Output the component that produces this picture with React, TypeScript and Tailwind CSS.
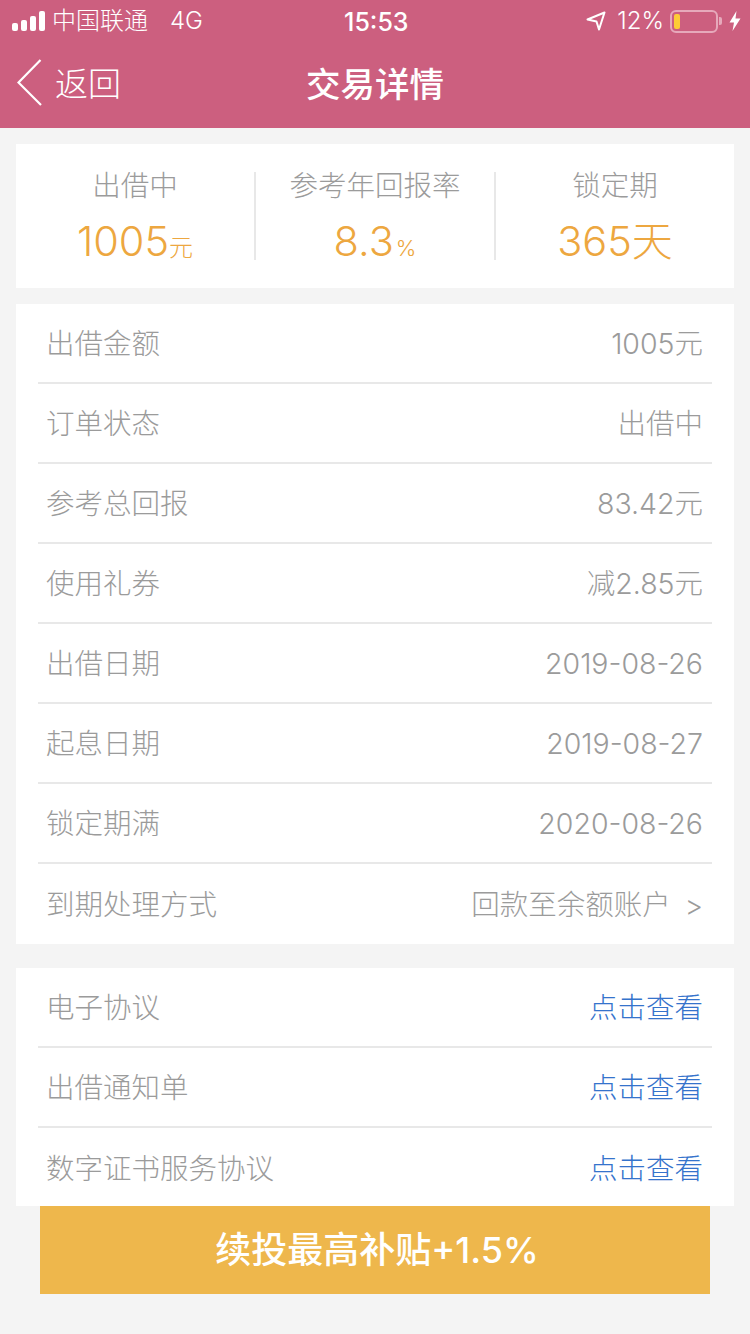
const font = "font-['Inter','Noto_Sans_CJK_SC',sans-serif]";

const details = [
  ["出借金额", "1005元"],
  ["订单状态", "出借中"],
  ["参考总回报", "83.42元"],
  ["使用礼券", "减2.85元"],
  ["出借日期", "2019-08-26"],
  ["起息日期", "2019-08-27"],
  ["锁定期满", "2020-08-26"],
];

const docs = ["电子协议", "出借通知单", "数字证书服务协议"];

function Row({ label, last, children }: { label: string; last?: boolean; children: React.ReactNode }) {
  return (
    <div className={`flex h-20 items-center justify-between pl-[8px] pr-[9px] pt-[3px] font-light text-[28.5px] text-[#9b9b9b] ${last ? "pb-0" : "border-b-2 border-[#e8e8e8] pb-0"}`}>
      <span>{label}</span>
      {children}
    </div>
  );
}

function Stat({ title, value, unit, unitClass }: { title: string; value: string; unit: string; unitClass: string }) {
  return (
    <div className="flex flex-1 flex-col items-center">
      <div className="text-[28.5px] leading-[28px] font-light text-[#9b9b9b]">{title}</div>
      <div className="mt-[18px] flex h-[46px] items-baseline text-[41.5px] leading-[46px] font-light text-[#eda740]">
        {value}
        <span className={unitClass}>{unit}</span>
      </div>
    </div>
  );
}

export default function App() {
  return (
    <div className={`flex h-[1334px] w-[750px] flex-col bg-[#f4f4f4] ${font}`}>
      <div className="h-[128px] bg-[#cc5f7f] text-white">
        <div className="relative flex h-10 items-center justify-between pl-3 pr-[9px] pt-[2px]">
          <div className="flex items-center">
            <div className="flex items-end gap-[3px]">
              <div className="h-[8px] w-[6px] rounded-[2px] bg-white" />
              <div className="h-[11px] w-[6px] rounded-[2px] bg-white" />
              <div className="h-[15px] w-[6px] rounded-[2px] bg-white" />
              <div className="h-[20px] w-[6px] rounded-[2px] bg-white" />
            </div>
            <span className="ml-[7px] text-[24px] font-light">中国联通</span>
            <span className="ml-[22px] text-[24px] font-light">4G</span>
          </div>
          <div className="absolute left-[344px] top-[4px] text-[25px] font-medium">15:53</div>
          <div className="flex items-center">
            <svg width="20" height="20" viewBox="0 0 20 20" fill="none" stroke="white" strokeWidth="2" strokeLinejoin="round">
              <path d="M1.5 8.5 18.5 1.5 13 18.5 10.5 10.5Z" />
            </svg>
            <span className="ml-[11px] text-[24px] font-light">12%</span>
            <div className="ml-[6px] flex h-[23px] w-[48px] items-center rounded-[6px] border-2 border-[#e6a9bb] px-[2px]">
              <div className="h-[15px] w-[6px] rounded-[2px] bg-[#fdcc36]" />
            </div>
            <div className="ml-[1px] h-[8px] w-[3px] rounded-r-[2px] bg-[#e6a9bb]" />
            <svg className="ml-[7px]" width="12" height="20" viewBox="0 0 12 20" fill="white">
              <path d="M7.5 0 0.5 11.5H5L3.5 20 11.5 7.5H6.5Z" />
            </svg>
          </div>
        </div>
        <div className="relative flex h-[88px] items-center justify-center pt-[2px]">
          <div className="absolute left-[17px] top-[16px] flex items-center">
            <svg width="26" height="48" viewBox="0 0 26 48" fill="none" stroke="white" strokeWidth="2.2">
              <path d="M23.5 1 1.5 23.5l22.5 22.5" />
            </svg>
            <span className="ml-[12px] pt-[4px] text-[33px] font-light">返回</span>
          </div>
          <span className="text-[34.5px] font-medium">交易详情</span>
        </div>
      </div>

      <div className="mx-4 mt-4 flex h-[144px] items-start bg-white pt-[28px]">
        <Stat title="出借中" value="1005" unit="元" unitClass="text-[24px]" />
        <div className="h-[88px] w-[2px] bg-[#e8e8e8]" />
        <Stat title="参考年回报率" value="8.3" unit="%" unitClass="ml-[2px] text-[22px]" />
        <div className="h-[88px] w-[2px] bg-[#e8e8e8]" />
        <Stat title="锁定期" value="365" unit="天" unitClass="text-[41px]" />
      </div>

      <div className="mx-4 mt-4 bg-white px-[22px]">
        {details.map(([label, value]) => (
          <Row key={label} label={label}>
            <span>{value}</span>
          </Row>
        ))}
        <Row label="到期处理方式" last>
          <span className="flex items-center">
            <span>回款至余额账户</span>
            <span className="ml-[14px] text-[28px]">&gt;</span>
          </span>
        </Row>
      </div>

      <div className="mx-4 mt-6 h-[238px] bg-white px-[22px]">
        {docs.map((label, i) => (
          <Row key={label} label={label} last={i === docs.length - 1}>
            <span className="text-[#3573cc]">点击查看</span>
          </Row>
        ))}
      </div>

      <div className="mx-10 flex h-[88px] items-center justify-center bg-[#eeb74c] pl-[4px] text-[36px] font-medium text-white">
        续投最高补贴+1.5%
      </div>
    </div>
  );
}
